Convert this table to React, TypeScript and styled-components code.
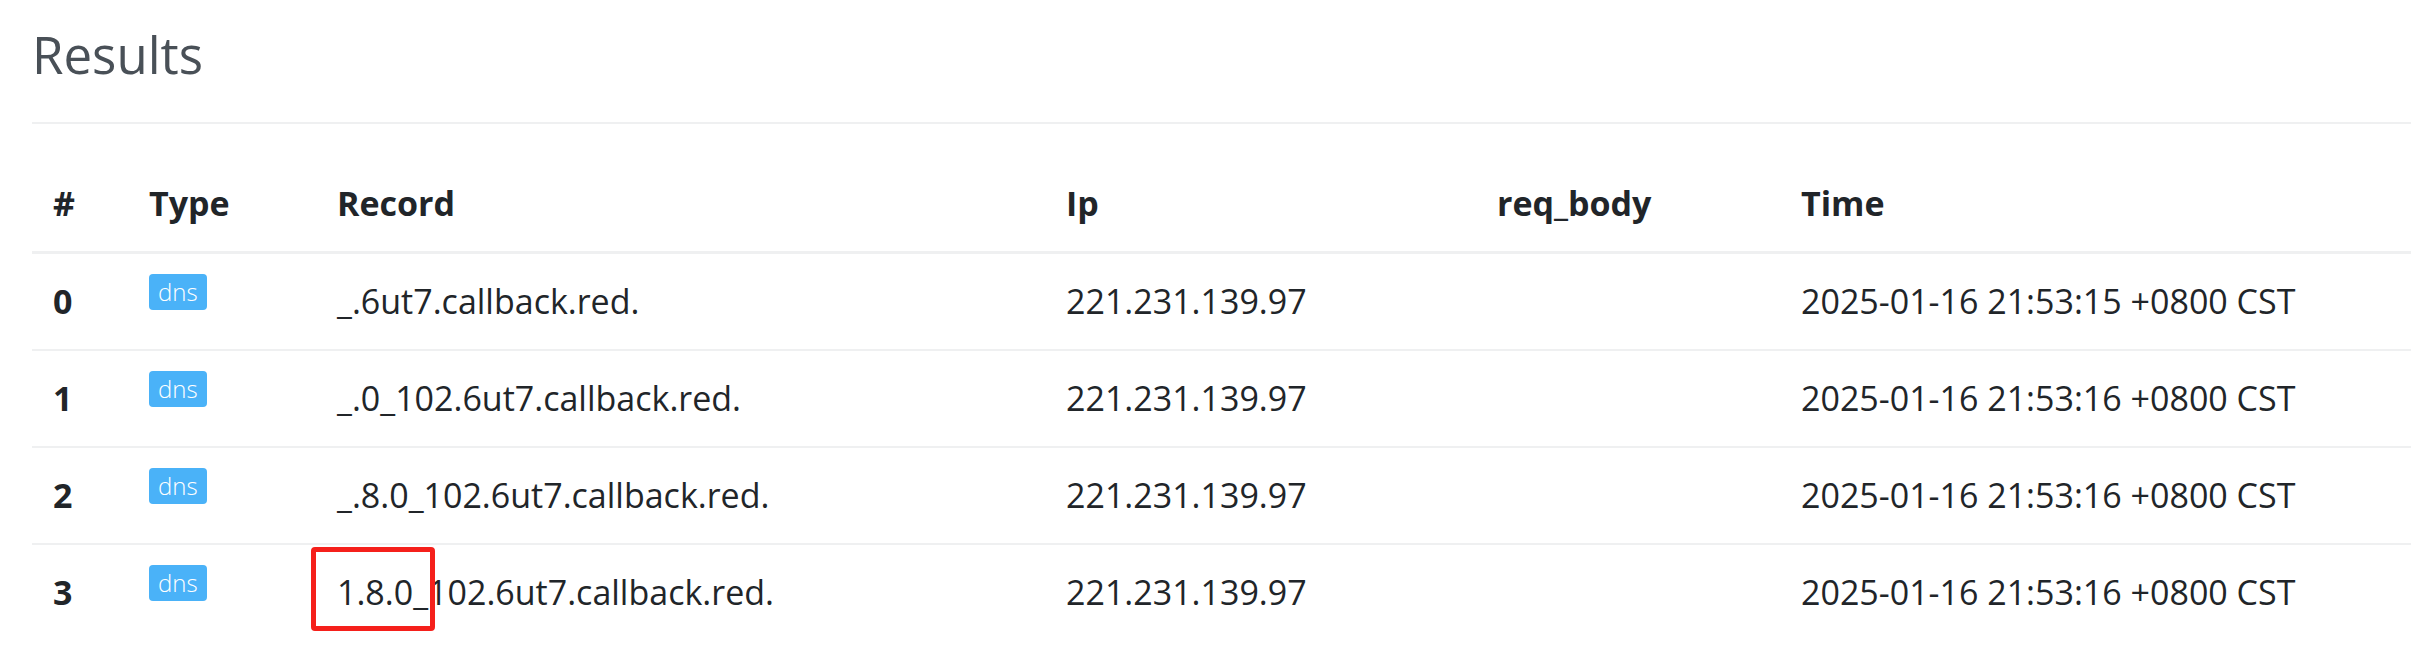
import React from "react";
import styled, { createGlobalStyle } from "styled-components";

const GlobalStyle = createGlobalStyle`
  html, body {
    margin: 0;
    padding: 0;
    background: #ffffff;
  }
  body {
    font-family: "Open Sans", "Noto Sans", "Liberation Sans", sans-serif;
    color: #212529;
  }
`;

const Page = styled.main`
  padding: 24px 0 0 32px;
  width: 2411px;
  box-sizing: border-box;
`;

const Title = styled.h2`
  margin: 0;
  font-size: 51px;
  font-weight: 400;
  line-height: 60px;
  color: #495057;
`;

const Rule = styled.hr`
  margin: 38px 0 32px;
  border: 0;
  border-top: 2px solid #eff0f1;
  height: 0;
`;

const Table = styled.table`
  width: 100%;
  table-layout: fixed;
  border-collapse: separate;
  border-spacing: 0;
  font-size: 34px;
  line-height: 51px;
`;

const HeadCell = styled.th`
  text-align: left;
  font-weight: 700;
  padding: 22px 21px;
  border-bottom: 3px solid #eff0f1;
  white-space: nowrap;
`;

const Cell = styled.td<{ $first?: boolean; $marked?: boolean }>`
  padding: 22px 21px;
  border-top: ${(p) => (p.$first ? "0" : "2px solid #eff0f1")};
  font-weight: 400;
  white-space: nowrap;
  vertical-align: top;
  position: ${(p) => (p.$marked ? "relative" : "static")};
`;

const IndexCell = styled(Cell)`
  font-weight: 700;
`;

const Badge = styled.span`
  display: inline-block;
  vertical-align: top;
  margin-top: -2px;
  height: 36px;
  padding: 0 9px;
  border-radius: 4px;
  background: #4ab2f8;
  color: #ffffff;
  font-size: 24px;
  font-weight: 300;
  line-height: 36px;
`;

const Marker = styled.span`
  position: absolute;
  left: -5px;
  top: 2px;
  width: 124px;
  height: 84px;
  box-sizing: border-box;
  border: 5px solid #f5201b;
  border-radius: 4px;
  pointer-events: none;
`;

type Row = { record: string; ip: string; body: string; time: string; marked?: boolean };

const rows: Row[] = [
  { record: "_.6ut7.callback.red.", ip: "221.231.139.97", body: "", time: "2025-01-16 21:53:15 +0800 CST" },
  { record: "_.0_102.6ut7.callback.red.", ip: "221.231.139.97", body: "", time: "2025-01-16 21:53:16 +0800 CST" },
  { record: "_.8.0_102.6ut7.callback.red.", ip: "221.231.139.97", body: "", time: "2025-01-16 21:53:16 +0800 CST" },
  { record: "1.8.0_102.6ut7.callback.red.", ip: "221.231.139.97", body: "", time: "2025-01-16 21:53:16 +0800 CST", marked: true },
];

export default function App() {
  return (
    <>
      <GlobalStyle />
      <Page>
        <Title>Results</Title>
        <Rule />
        <Table>
          <colgroup>
            <col style={{ width: 96 }} />
            <col style={{ width: 188 }} />
            <col style={{ width: 729 }} />
            <col style={{ width: 431 }} />
            <col style={{ width: 304 }} />
            <col />
          </colgroup>
          <thead>
            <tr>
              <HeadCell>#</HeadCell>
              <HeadCell>Type</HeadCell>
              <HeadCell>Record</HeadCell>
              <HeadCell>Ip</HeadCell>
              <HeadCell>req_body</HeadCell>
              <HeadCell>Time</HeadCell>
            </tr>
          </thead>
          <tbody>
            {rows.map((r, i) => (
              <tr key={i}>
                <IndexCell $first={i === 0}>{i}</IndexCell>
                <Cell $first={i === 0}>
                  <Badge>dns</Badge>
                </Cell>
                <Cell $first={i === 0} $marked={r.marked}>
                  {r.record}
                  {r.marked && <Marker />}
                </Cell>
                <Cell $first={i === 0}>{r.ip}</Cell>
                <Cell $first={i === 0}>{r.body}</Cell>
                <Cell $first={i === 0}>{r.time}</Cell>
              </tr>
            ))}
          </tbody>
        </Table>
      </Page>
    </>
  );
}
